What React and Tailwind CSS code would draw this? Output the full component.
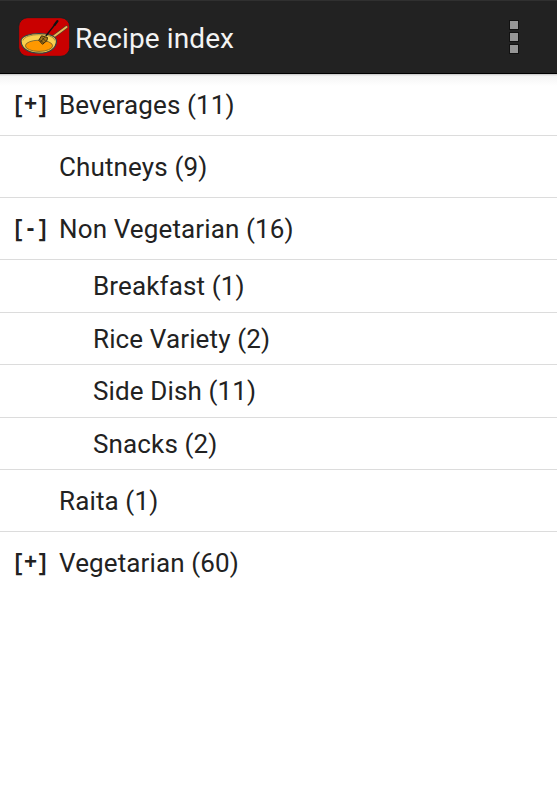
import React from 'react';

const rows = [
    { label: 'Beverages (11)', sign: '+' },
    { label: 'Chutneys (9)' },
    { label: 'Non Vegetarian (16)', sign: '-' },
    { label: 'Breakfast (1)', child: true },
    { label: 'Rice Variety (2)', child: true },
    { label: 'Side Dish (11)', child: true },
    { label: 'Snacks (2)', child: true },
    { label: 'Raita (1)' },
    { label: 'Vegetarian (60)', sign: '+', last: true },
];

function PanIcon() {
    return (
        <svg className="w-[52px] h-10 shrink-0" viewBox="18 17 52 40">
            <rect x="18.7" y="17.7" width="51" height="38.6" rx="9" fill="#c90000" stroke="#0d2424" strokeWidth="0.8" />
            {/* pan handle */}
            <path d="M53 37 L66.5 27" stroke="#5a3a2c" strokeWidth="3.4" strokeLinecap="round" />
            <path d="M53 37 L66.5 27" stroke="#e6b955" strokeWidth="2" strokeLinecap="round" />
            {/* pan body */}
            <path d="M21 41 C21 31.5 56.5 30.5 56.5 41 C56.5 48.5 49 53.2 39 53.2 C29 53.2 21.5 49 21 41 Z" fill="#f9d04e" stroke="#334548" strokeWidth="1.2" />
            <path d="M23 40.5 C25 33 53 32.5 54.8 40.5" fill="none" stroke="#8a7a3a" strokeWidth="0.7" />
            <ellipse cx="39" cy="45.8" rx="13.6" ry="5.6" fill="#ff9800" stroke="#6b5a30" strokeWidth="0.8" />
            {/* spatula */}
            <path d="M57.5 21 L54.5 25" stroke="#111" strokeWidth="2.1" strokeLinecap="round" />
            <path d="M55 24.5 L45.8 36" stroke="#111" strokeWidth="1.3" />
            <path d="M41.5 35.8 L47.5 37.5 L47 40.5 L42.5 44.3 L38.8 40.3 Z" fill="#a57618" stroke="#2a1c08" strokeWidth="0.9" />
            <path d="M42 37.5 L45.5 41 M44.5 37.5 L40.5 42 M40 39.5 L43.5 43" stroke="#2a1c08" strokeWidth="0.7" />
        </svg>
    );
}

function Sign({ sign }) {
    return (
        <span className="flex w-[33px] justify-between pb-1 leading-8 text-[26px] font-semibold tracking-normal font-['Open_Sans',sans-serif]">
            <span className="w-2">[</span>
            <span className="w-4 text-center text-[23px] leading-[33px] font-bold">{sign}</span>
            <span className="w-2 flex justify-end">]</span>
        </span>
    );
}

function Row({ label, sign, child, last }) {
    return (
        <li className={`flex items-center pt-[2px] text-[26px] tracking-[0.13px] border-b ${child ? 'h-[52.6px] pl-[93px]' : 'h-[62px]'} ${last ? 'border-transparent' : 'border-[#dcdcdc]'}`}>
            {!child && <span className="w-[59px] pl-[14px]">{sign && <Sign sign={sign} />}</span>}
            <span>{label}</span>
        </li>
    );
}

export default function App() {
    return (
        <div className="min-h-screen bg-white text-[#222] font-['Roboto',sans-serif]">
            <header className="h-[74px] bg-[#222] border-t border-[#303030] border-b-1 border-b-black flex items-center pl-[18px] pr-[39px]">
                <PanIcon />
                <h1 className="ml-[5px] pt-[3px] text-[28px] tracking-[0.1px] text-[#f3f3f3]">Recipe index</h1>
                <div className="ml-auto flex flex-col gap-1">
                    <span className="size-2 bg-[#969696] outline outline-black/50" />
                    <span className="size-2 bg-[#969696] outline outline-black/50" />
                    <span className="size-2 bg-[#969696] outline outline-black/50" />
                </div>
            </header>
            <ul className="bg-linear-to-b from-[#c4c4c4] from-0% via-[#f5f5f5] via-[2px] to-white to-[12px]">
                {rows.map((row) => (
                    <Row key={row.label} {...row} />
                ))}
            </ul>
        </div>
    );
}
